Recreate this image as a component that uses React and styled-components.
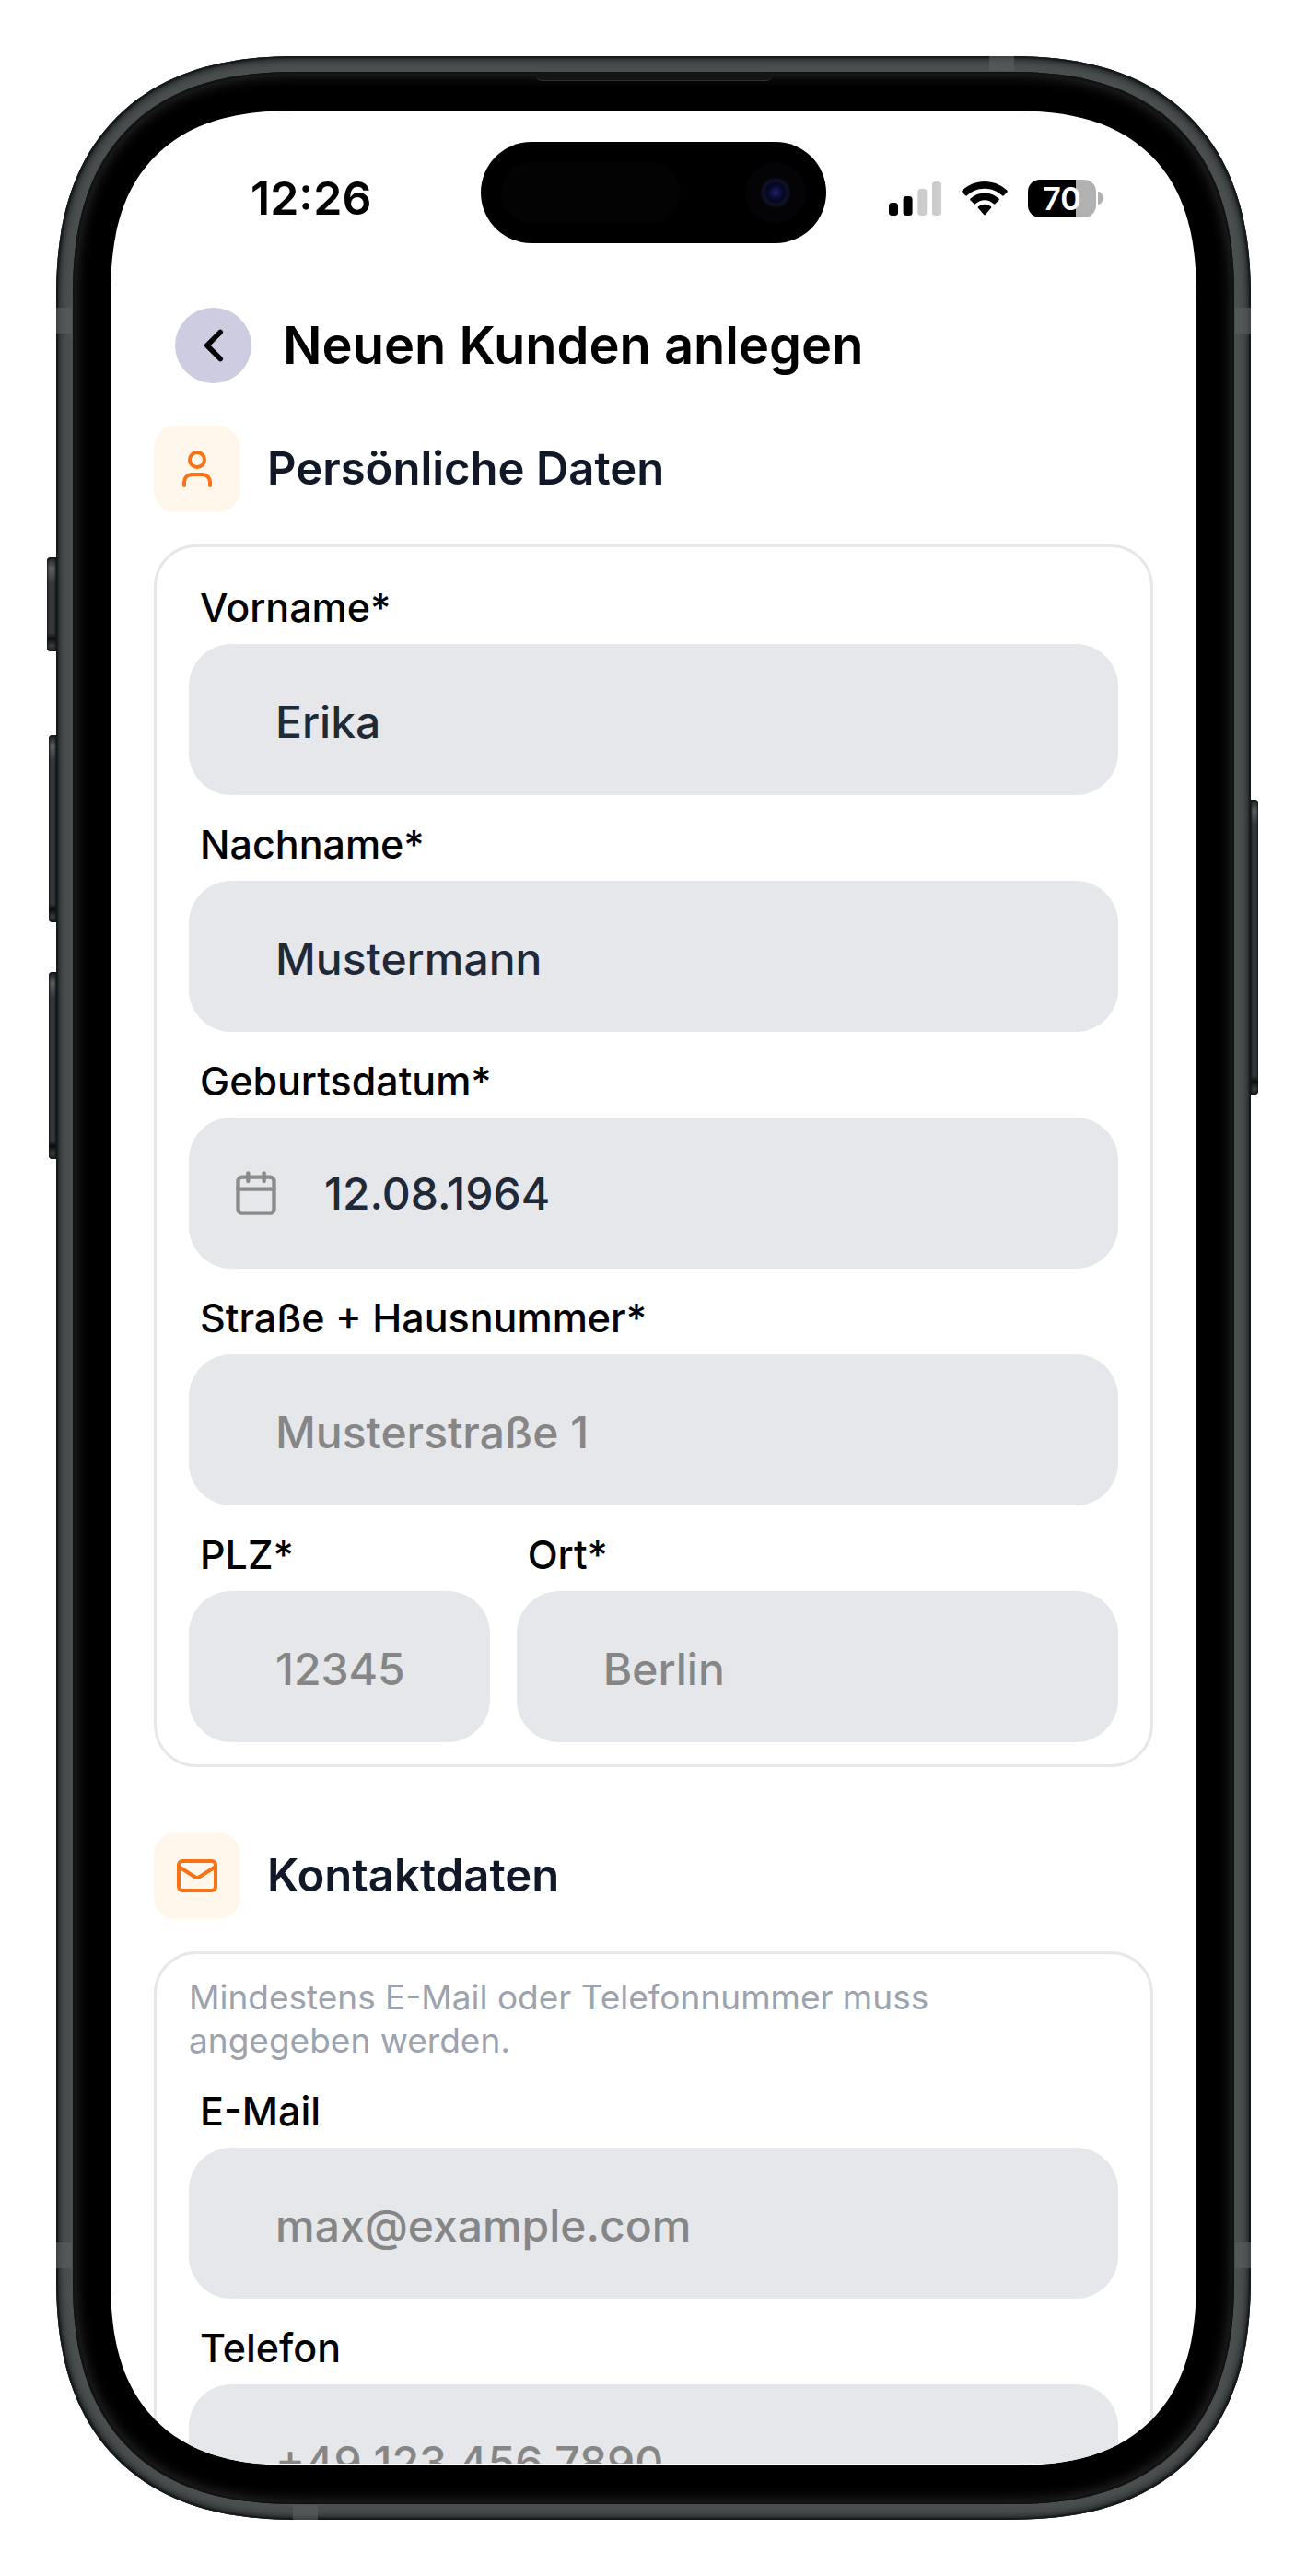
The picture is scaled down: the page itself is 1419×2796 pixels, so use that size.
import React from "react";
import styled, { createGlobalStyle } from "styled-components";
import { Calendar, ChevronLeft, Mail, User } from "lucide-react";

const GlobalStyle = createGlobalStyle`
  * {
    box-sizing: border-box;
  }
  body {
    margin: 0;
    background: #fff;
    font-family: Inter, "Open Sans", sans-serif;
  }
`;

const Page = styled.main`
  padding: 61px;
`;

const Phone = styled.div`
  position: relative;
  padding: 17px 18px;
  border-radius: 226px;
  background: #4b4f50;
  box-shadow: inset 0 0 2px 2px #14181a, inset 0 0 10px 3px #181b1c;
  @supports (corner-shape: superellipse(1.2)) {
    border-radius: 264px;
    corner-shape: superellipse(1.27);
  }
`;
const SideButton = styled.span`
  position: absolute;
  top: ${(props) => props.$top}px;
  ${(props) => props.$side}: -${(props) => props.$depth}px;
  width: ${(props) => props.$depth}px;
  height: ${(props) => props.$length}px;
  border-radius: ${(props) =>
    props.$side === "left" ? "4px 0 0 4px" : "0 4px 4px 0"};
  background: linear-gradient(
    #1a1d1e,
    #5c6061 12px,
    #34383a 28px,
    #34383a calc(100% - 20px),
    #0b0c0c calc(100% - 14px),
    #3a3d3e calc(100% - 6px),
    #1a1d1e
  );
  box-shadow: inset 0 0 2px 1px #111414;
`;
const Antenna = styled.span`
  position: absolute;
  ${(props) => props.$place}
  width: ${(props) => (props.$flat ? 27 : 17)}px;
  height: ${(props) => (props.$flat ? 16 : 28)}px;
  background: #5a5f60;
  opacity: 0.6;
`;
const Bezel = styled.div`
  position: relative;
  padding: 42px 41px;
  border-radius: 208px;
  background: #000;
  box-shadow: inset 0 0 0 2px #111212, inset 0 0 16px 2px #333;
  @supports (corner-shape: superellipse(1.2)) {
    border-radius: 246px;
    corner-shape: superellipse(1.29);
  }
`;
const Earpiece = styled.span`
  position: absolute;
  top: 0;
  left: 50%;
  width: 256px;
  height: 10px;
  margin-left: -128px;
  border-bottom: 1px solid #303030;
  border-radius: 0 0 6px 6px;
  background: #151515;
`;

const Screen = styled.div`
  display: flex;
  flex-direction: column;
  aspect-ratio: 1179 / 2556;
  padding: 34px 0 2px;
  overflow: hidden;
  border-radius: 167px;
  background: #fff;
  @supports (corner-shape: superellipse(1.2)) {
    border-radius: 205px;
    corner-shape: superellipse(1.34);
  }
`;

const StatusBar = styled.div`
  display: grid;
  grid-template-columns: 1fr 375px 1fr;
  align-items: center;
  flex-shrink: 0;
`;
const Time = styled.time`
  padding: 12px 0 0 152px;
  font-size: 50px;
  font-weight: 600;
  line-height: 60px;
`;
const Island = styled.div`
  display: flex;
  align-items: center;
  justify-content: space-between;
  height: 110px;
  padding: 22px;
  border-radius: 55px;
  background: #000;
`;
const Sensor = styled.span`
  width: 194px;
  height: 66px;
  border-radius: 33px;
  background: #030303;
`;
const Camera = styled.span`
  width: 66px;
  height: 66px;
  border-radius: 50%;
  background: radial-gradient(
    circle,
    #1f2266 0,
    #0b0d3a 6px,
    #05071c 10px,
    #10122a 13px,
    #0c0d1e 15px,
    #040305 17px
  );
`;
const Indicators = styled.div`
  display: flex;
  align-items: center;
  gap: 22px;
  padding: 12px 0 0 68px;
`;
const Battery = styled.div`
  display: flex;
  align-items: center;
`;
const Charge = styled.span`
  width: 74px;
  height: 41px;
  border-radius: 13px;
  background: linear-gradient(90deg, #000 70%, #b1b1b1 70%);
  color: #fff;
  font-size: 34px;
  font-weight: 600;
  line-height: 41px;
  text-align: center;
`;
const BatteryTip = styled.span`
  width: 5px;
  height: 14px;
  margin-left: 2px;
  border-radius: 0 7px 7px 0;
  background: #b1b1b1;
`;

const Header = styled.header`
  display: flex;
  align-items: center;
  gap: 34px;
  flex-shrink: 0;
  padding: 70px 70px 46px;
`;
const BackButton = styled.button`
  display: flex;
  align-items: center;
  justify-content: center;
  width: 83px;
  height: 82px;
  padding: 0;
  border: 0;
  border-radius: 50%;
  background: #cdcce0;
  color: #000;
`;
const Title = styled.h1`
  margin: 0;
  font-size: 56px;
  font-weight: 600;
  line-height: 80px;
`;

const Form = styled.form`
  display: flex;
  flex-direction: column;
  flex: 1;
  gap: 71px;
  min-height: 0;
  padding: 0 47px;
  overflow: hidden;
`;
const Section = styled.section`
  display: flex;
  flex-direction: column;
  flex-shrink: 0;
  gap: 35px;
`;
const SectionHead = styled.div`
  display: flex;
  align-items: center;
  gap: 29px;
`;
const IconTile = styled.span`
  display: flex;
  align-items: center;
  justify-content: center;
  width: 94px;
  height: 94px;
  border-radius: 24px;
  background: #fff6ec;
  color: #f97316;
`;
const SectionTitle = styled.h2`
  margin: 0;
  color: #111827;
  font-size: 49px;
  font-weight: 600;
  line-height: 72px;
`;
const Card = styled.div`
  display: flex;
  flex-direction: column;
  gap: 11px;
  padding: 23px 35px 24px;
  border: 3px solid #e5e7eb;
  border-radius: 46px;
`;
const Hint = styled.p`
  max-width: 880px;
  margin: 0;
  color: #9ca3af;
  font-size: 37px;
  line-height: 47px;
`;
const FieldBox = styled.div`
  display: flex;
  flex-direction: column;
  gap: 8px;
  min-width: 0;
  padding-top: 10px;
`;
const Label = styled.label`
  padding-left: 12px;
  font-size: 43px;
  font-weight: 500;
  line-height: 64px;
`;
const Control = styled.div`
  display: flex;
  align-items: center;
  gap: 48px;
  height: 164px;
  padding: ${(props) => (props.$icon ? "0 47px" : "4px 40px 0 94px")};
  border-radius: 46px;
  background: #e5e7eb;
  color: #8a8a8a;
  svg {
    flex-shrink: 0;
  }
`;
const Input = styled.input`
  flex: 1;
  min-width: 0;
  height: 100%;
  padding: 0;
  border: 0;
  outline: 0;
  background: transparent;
  color: #1f2937;
  font-family: inherit;
  font-size: 48px;
  font-weight: 500;
  &::placeholder {
    color: #868686;
    opacity: 1;
  }
`;
const Row = styled.div`
  display: grid;
  grid-template-columns: 1fr 2fr;
  gap: 29px;
`;

const Field = ({ id, label, icon, ...rest }) => {
  return (
    <FieldBox>
      <Label htmlFor={id}>{label}</Label>
      <Control $icon={Boolean(icon)}>
        {icon}
        <Input id={id} name={id} {...rest} />
      </Control>
    </FieldBox>
  );
};

const SignalIcon = () => (
  <svg width="57" height="37" viewBox="0 0 57 37" aria-hidden="true">
    <rect x="0" y="23" width="10" height="14" rx="3.5" />
    <rect x="15.6" y="16" width="10" height="21" rx="3.5" />
    <rect x="31.3" y="8" width="10" height="29" rx="3.5" fill="#ccc" />
    <rect x="47" y="0" width="10" height="37" rx="3.5" fill="#ccc" />
  </svg>
);

const WifiIcon = () => (
  <svg width="50" height="37" viewBox="0 0 50 37" aria-hidden="true">
    <path d="M25 0c9.300 0 17.800 3.600 24.200 9.500.9.900.9 1.500.1 2.300l-3.300 3.300c-.8.800-1.400.8-2.200 0C38.900 10.600 32.300 7.800 25 7.800S11.100 10.600 6.200 15.100c-.8.800-1.400.8-2.200 0L.7 11.800c-.8-.8-.8-1.400.1-2.300C7.200 3.600 15.700 0 25 0z" />
    <path d="M25 12.500c5.900 0 11.200 2.200 15.300 5.900.8.800.8 1.400 0 2.200L36.700 24c-.7.700-1.300.7-2.100 0-2.600-2.300-5.900-3.700-9.600-3.700s-7 1.400-9.600 3.700c-.8.700-1.400.7-2.100 0l-3.600-3.400c-.8-.8-.8-1.400 0-2.200 4.100-3.700 9.400-5.900 15.300-5.900z" />
    <path d="M25 24.700c2.600 0 4.900.9 6.700 2.400.8.700.8 1.300.1 2L26 35.700c-.7.700-1.300.7-2 0l-5.800-6.600c-.7-.7-.7-1.300.1-2 1.800-1.500 4.100-2.400 6.700-2.400z" />
  </svg>
);

const App = () => {
  return (
    <Page>
      <GlobalStyle />
      <Phone>
        <SideButton $side="left" $top={544} $length={102} $depth={10} />
        <SideButton $side="left" $top={737} $length={203} $depth={8} />
        <SideButton $side="left" $top={994} $length={203} $depth={8} />
        <SideButton $side="right" $top={807} $length={320} $depth={8} />
        <Antenna $place="left: 0; top: 273px;" />
        <Antenna $place="right: 0; top: 273px;" />
        <Antenna $place="left: 0; bottom: 273px;" />
        <Antenna $place="right: 0; bottom: 273px;" />
        <Antenna $flat $place="right: 257px; top: 0;" />
        <Antenna $flat $place="left: 257px; bottom: 0;" />
        <Bezel>
          <Earpiece />
          <Screen>
            <StatusBar>
              <Time>12:26</Time>
              <Island>
                <Sensor />
                <Camera />
              </Island>
              <Indicators>
                <SignalIcon />
                <WifiIcon />
                <Battery>
                  <Charge>70</Charge>
                  <BatteryTip />
                </Battery>
              </Indicators>
            </StatusBar>
            <Header>
              <BackButton type="button" aria-label="Zurück">
                <ChevronLeft size={58} strokeWidth={2.3} />
              </BackButton>
              <Title>Neuen Kunden anlegen</Title>
            </Header>
            <Form>
              <Section>
                <SectionHead>
                  <IconTile>
                    <User size={48} />
                  </IconTile>
                  <SectionTitle>Persönliche Daten</SectionTitle>
                </SectionHead>
                <Card>
                  <Field id="vorname" label="Vorname*" defaultValue="Erika" />
                  <Field
                    id="nachname"
                    label="Nachname*"
                    defaultValue="Mustermann"
                  />
                  <Field
                    id="geburtsdatum"
                    label="Geburtsdatum*"
                    defaultValue="12.08.1964"
                    icon={<Calendar size={52} />}
                  />
                  <Field
                    id="strasse"
                    label="Straße + Hausnummer*"
                    placeholder="Musterstraße 1"
                  />
                  <Row>
                    <Field id="plz" label="PLZ*" placeholder="12345" />
                    <Field id="ort" label="Ort*" placeholder="Berlin" />
                  </Row>
                </Card>
              </Section>
              <Section>
                <SectionHead>
                  <IconTile>
                    <Mail size={48} />
                  </IconTile>
                  <SectionTitle>Kontaktdaten</SectionTitle>
                </SectionHead>
                <Card>
                  <Hint>
                    Mindestens E-Mail oder Telefonnummer muss angegeben werden.
                  </Hint>
                  <Field
                    id="email"
                    type="email"
                    label="E-Mail"
                    placeholder="max@example.com"
                  />
                  <Field
                    id="telefon"
                    type="tel"
                    label="Telefon"
                    placeholder="+49 123 456 7890"
                  />
                </Card>
              </Section>
            </Form>
          </Screen>
        </Bezel>
      </Phone>
    </Page>
  );
};

export default App;
